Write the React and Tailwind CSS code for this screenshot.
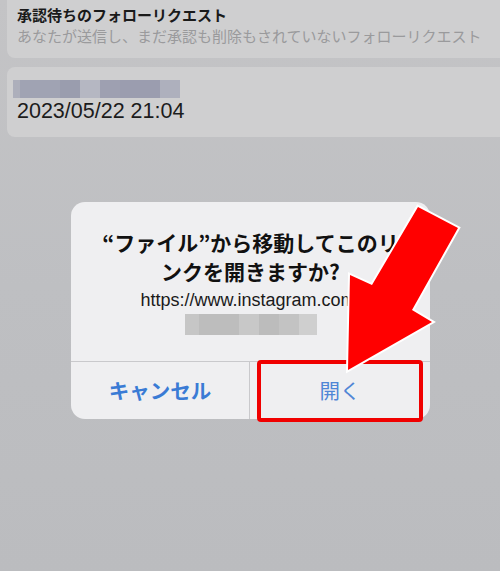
import React from "react";

const jp = { fontFamily: '"Noto Sans CJK JP", "Noto Sans", sans-serif' };
const latin = { fontFamily: '"Liberation Sans", "Noto Sans CJK JP", sans-serif' };

const BlurBlocks = ({ blocks, className }) => (
  <div className={`flex ${className}`}>
    {blocks.map((b, i) => (
      <div key={i} className="h-full" style={{ width: b.w, background: b.c }} />
    ))}
  </div>
);

const Arrow = () => (
  <svg className="absolute left-0 top-0 pointer-events-none" width="500" height="571" viewBox="0 0 500 571">
    <polygon
      points="418,207 458,228 412,310 432,322 348,370 350,275 372,285"
      fill="#ff0000"
      stroke="#ffffff"
      strokeWidth="4"
      strokeLinejoin="miter"
      paintOrder="stroke"
    />
  </svg>
);

export default function App() {
  return (
    <div className="relative w-[500px] h-[571px] overflow-hidden bg-gradient-to-b from-[#c4c4c6] via-[#bebfc2] to-[#bbbcbf]">
      {/* background list */}
      <div className="pl-[7px]">
        <div className="h-[58px] bg-[#cfcfd0] rounded-bl-[8px] pl-[10px] pt-[4px]" style={jp}>
          <p className="text-[15px] font-bold leading-[22px] text-[#1a1a1a]">承認待ちのフォローリクエスト</p>
          <p className="text-[15px] leading-[20px] text-[#9a9a9c] whitespace-nowrap">あなたが送信し、まだ承認も削除もされていないフォローリクエスト</p>
        </div>
        <div className="mt-[9px] h-[70px] bg-[#cfcfd0] rounded-l-[8px] pl-[6px] pt-[13px]">
          <BlurBlocks
            className="h-[18px]"
            blocks={[
              { w: 7, c: "#adafbb" },
              { w: 40, c: "#a0a3b3" },
              { w: 20, c: "#9a9dae" },
              { w: 20, c: "#b5b7c2" },
              { w: 20, c: "#9ea0b1" },
              { w: 40, c: "#9b9daf" },
              { w: 20, c: "#aeb0bd" },
            ]}
          />
          <p className="pl-[4px] text-[21.5px] leading-[26px] text-[#1c1c1c]" style={latin}>2023/05/22 21:04</p>
        </div>
      </div>

      {/* alert dialog */}
      <div className="ml-[71px] mt-[65px] w-[359px] h-[217px] rounded-[14px] bg-[#efeff1] flex flex-col overflow-hidden">
        <div className="h-[159px] flex flex-col items-center pt-[26px]">
          <p className="text-[21px] font-bold leading-[29px] text-[#111] text-center whitespace-nowrap" style={jp}>
            “ファイル”から移動してこのリ
            <br />
            ンクを開きますか?
          </p>
          <p className="mt-[4px] text-[18px] leading-[20px] text-[#1a1a1a] whitespace-nowrap" style={latin}>
            https://www.instagram.com/
          </p>
          <BlurBlocks
            className="mt-[4px] h-[21px]"
            blocks={[
              { w: 14, c: "#c6c6c6" },
              { w: 40, c: "#bdbdbd" },
              { w: 20, c: "#c8c8c8" },
              { w: 20, c: "#bcbcbc" },
              { w: 20, c: "#c3c3c3" },
              { w: 18, c: "#cfcfcf" },
            ]}
          />
        </div>
        <div className="flex-1 flex border-t border-[#c9c9cc]" style={jp}>
          <div className="w-[179px] border-r border-[#c9c9cc] flex items-center justify-center">
            <span className="text-[20.5px] font-bold text-[#3a7bd5]">キャンセル</span>
          </div>
          <div className="flex-1 flex items-center justify-center">
            <span className="text-[20.5px] text-[#4f86d6]">開く</span>
          </div>
        </div>
      </div>

      {/* highlight box */}
      <div className="absolute left-[257px] top-[360px] w-[166px] h-[62px] border-[4px] border-[#f00000] rounded-[4px]" />
      <Arrow />
    </div>
  );
}
